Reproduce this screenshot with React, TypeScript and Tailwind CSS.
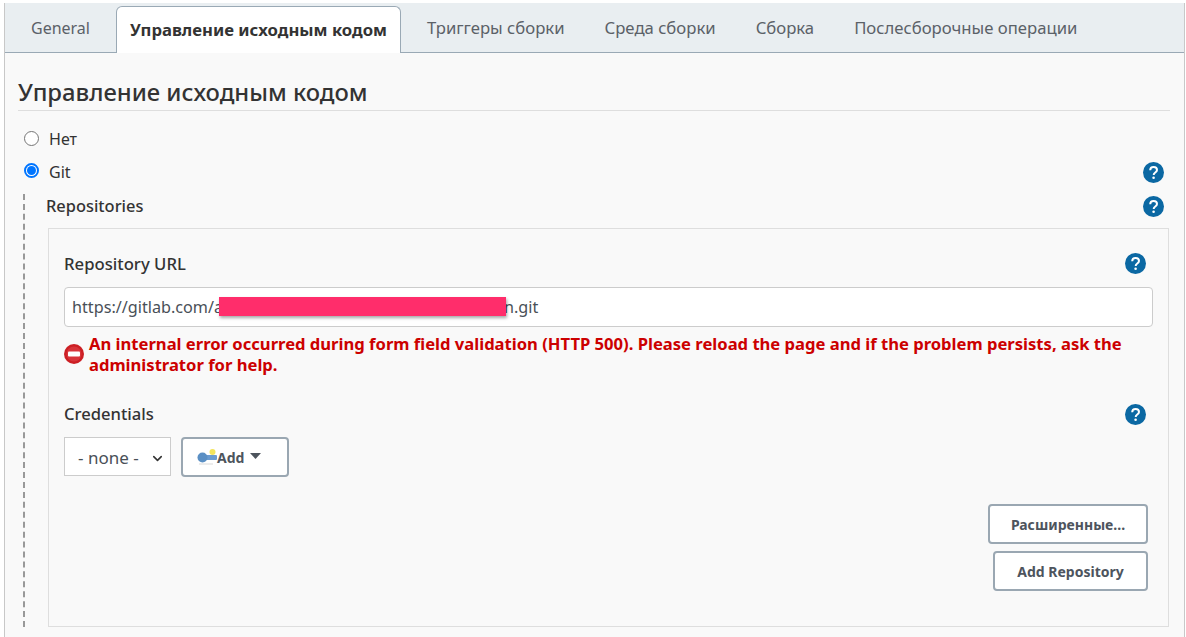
import { ChevronDown } from 'lucide-react'

const font = 'font-["Noto_Sans",sans-serif]'

function Help() {
  return (
    <svg width="21" height="21" viewBox="0 0 21 21" className="shrink-0">
      <circle cx="10.5" cy="10.5" r="10.5" fill="#0b68a3" />
      <path d="M7.2 8.2c0-2 1.5-3.3 3.4-3.3s3.4 1.2 3.4 3c0 2.6-3.3 2.6-3.3 5" fill="none" stroke="#fff" strokeWidth="2" />
      <circle cx="10.6" cy="15.8" r="1.3" fill="#fff" />
    </svg>
  )
}

function Radio({ checked }: { checked?: boolean }) {
  if (checked) {
    return (
      <span className="mb-[3px] flex h-[15px] w-[15px] items-center justify-center rounded-full border-2 border-[#0075ff] bg-white">
        <span className="h-[9px] w-[9px] rounded-full bg-[#0075ff]" />
      </span>
    )
  }
  return <span className="mb-[2px] h-[15px] w-[15px] rounded-full border border-[#767676] bg-white" />
}

function OutlineButton({ children, className }: { children: React.ReactNode; className?: string }) {
  return (
    <button className={`flex items-center justify-center rounded-[4px] border-2 border-[#9aa7b2] bg-white text-[14px] font-bold text-[#4d545d] ${className}`}>
      {children}
    </button>
  )
}

const tabs = ['Триггеры сборки', 'Среда сборки', 'Сборка', 'Послесборочные операции']

export default function App() {
  return (
    <div className={`${font} h-[637px] w-[1186px] overflow-hidden bg-white pl-1 pr-[1px] pt-[3px] text-[#333]`}>
      <div className="h-[634px] border-x border-[#c8c8c8] bg-[#f9f9f9]">
        <div className="flex h-[50px] border-b border-[#9aa9b5] bg-[#e9eef1] pl-[26px] text-[16.7px]">
          <div className="flex h-[49px] items-center text-[16px] text-[#5b6168]">General</div>
          <div className="ml-[26px] mr-[26px] mt-[3px] flex h-[47px] w-[285px] items-center justify-center rounded-t-[6px] border border-b-0 border-[#9aa9b5] bg-white font-bold text-[#333]">
            Управление исходным кодом
          </div>
          <div className="flex gap-10 text-[#5b6168]">
            {tabs.map((t) => (
              <div key={t} className="flex h-[49px] items-center">{t}</div>
            ))}
          </div>
        </div>

        <div className="px-[13px]">
          <h2 className="mt-[23px] h-[35px] w-[1152px] border-b border-[#dedede] text-[23.8px] leading-[33px] font-medium text-[#333]">
            Управление исходным кодом
          </h2>
          <div className="ml-[6px] mt-[18px] flex h-5 items-center gap-[10px] text-[16px]">
            <Radio />
            Нет
          </div>
          <div className="ml-[6px] mt-[13px] flex h-5 w-[1140px] items-center gap-[10px] text-[16px]">
            <Radio checked />
            <span className="flex-1">Git</span>
            <Help />
          </div>
          <div className="ml-[5px] border-l-2 border-dashed border-[#999] pl-[21px]">
            <div className="mt-[12px] flex h-[24px] w-[1118px] items-center justify-between text-[16.4px] font-medium">
              Repositories
              <Help />
            </div>
            <div className="ml-[2px] mt-[10px] h-[399px] w-[1121px] border border-[#dedede] bg-[#f9f9f9] px-[15px]">
              <div className="mt-[24px] flex h-[21px] w-[1082px] items-center justify-between text-[16.7px] font-medium">
                Repository URL
                <Help />
              </div>
              <div className="relative mt-[13px] flex h-[40px] w-[1089px] items-center whitespace-pre rounded-[4px] border border-[#ccc] bg-white pl-[7px] text-[16.2px] text-[#495057]">
                <span className="w-[432px]">https://gitlab.com/a</span>
                <span>n.git</span>
                <span className="absolute left-[154px] top-[9px] h-[19px] w-[287px] bg-[#ff2d6b] shadow-[1px_2px_3px_rgba(0,0,0,0.35)]" />
              </div>
              <div className="mt-[6px] flex w-[1085px] items-center gap-[5px] text-[16.6px] leading-[21px] font-bold text-[#cc0000]">
                <svg width="20" height="20" viewBox="0 0 20 20" className="shrink-0">
                  <circle cx="10" cy="10" r="10" fill="#cc1f24" />
                  <circle cx="10" cy="10" r="7.5" fill="#d8343a" />
                  <rect x="4" y="7.5" width="12" height="5" rx="1" fill="#fff" />
                </svg>
                <span>
                  An internal error occurred during form field validation (HTTP 500). Please reload the page and if the problem persists, ask the administrator for help.
                </span>
              </div>
              <div className="mt-[29px] flex h-[21px] w-[1082px] items-center justify-between text-[16.6px] font-medium">
                Credentials
                <Help />
              </div>
              <div className="mt-[12px] flex gap-[10px]">
                <div className="flex h-[39px] w-[107px] items-center justify-between border border-[#ccc] bg-white pl-[13px] pr-[5px] pt-[3px] text-[17px] text-[#495057]">
                  - none -
                  <ChevronDown size={15} strokeWidth={2.5} className="text-[#333]" />
                </div>
                <OutlineButton className="h-[40px] w-[108px] justify-start pl-[14px]">
                  <svg width="20" height="18" viewBox="0 0 20 18" className="shrink-0">
                    <circle cx="15.5" cy="4" r="3" fill="#f3e45c" />
                    <rect x="5" y="7" width="15" height="5" rx="1" fill="#6a9bd0" />
                    <circle cx="5.5" cy="9.5" r="5" fill="#5a8fc4" />
                    <rect x="2" y="15" width="14" height="2" fill="#ececec" />
                  </svg>
                  Add
                  <svg width="11" height="6" viewBox="0 0 11 6" className="mb-[2px] ml-[6px]">
                    <path d="M0 0h11L5.5 6z" fill="#4d545d" />
                  </svg>
                </OutlineButton>
              </div>
              <div className="ml-auto mt-[27px] flex w-[160px] -translate-x-[5px] flex-col items-end gap-[7px]">
                <OutlineButton className="h-[40px] w-[160px]">Расширенные...</OutlineButton>
                <OutlineButton className="h-[40px] w-[155px]">Add Repository</OutlineButton>
              </div>
            </div>
          </div>
        </div>
      </div>
    </div>
  )
}
